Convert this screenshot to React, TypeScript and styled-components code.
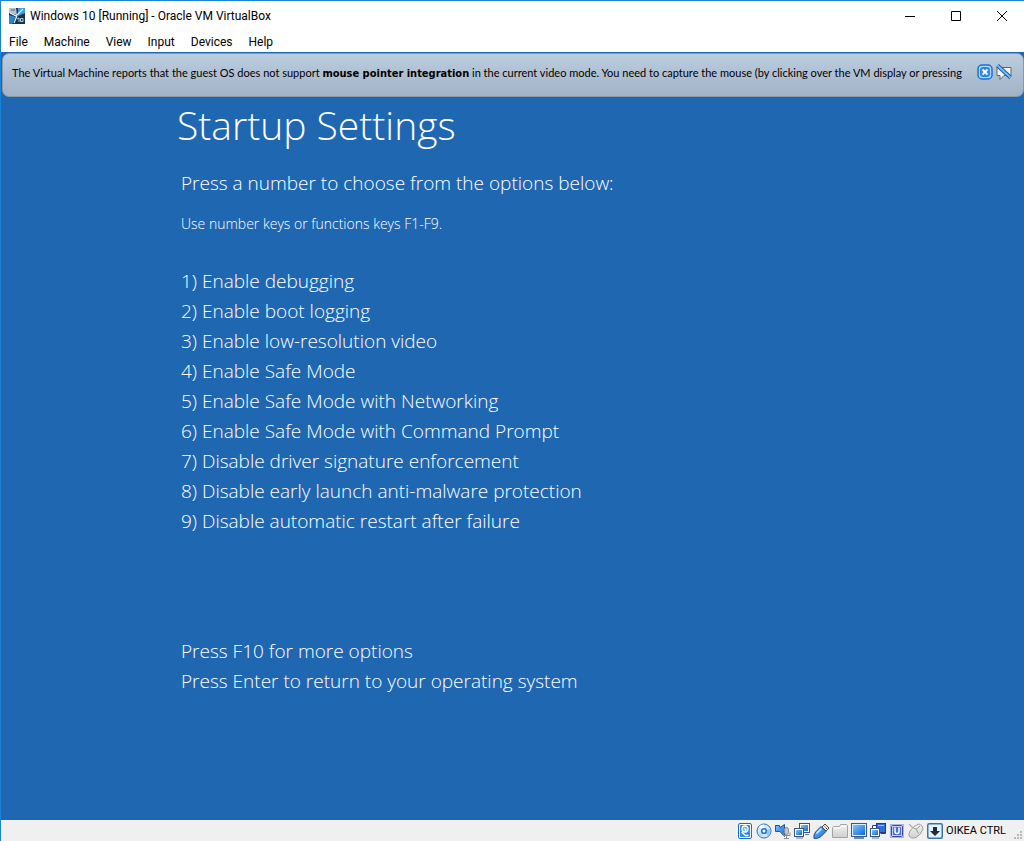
import React from "react";
import styled, { createGlobalStyle } from "styled-components";

const uiFont = `Roboto, "Open Sans", sans-serif`;
const dialogFont = `Lato, "Liberation Sans", sans-serif`;
const dialogBoldFont = `"DejaVu Sans Condensed", "DejaVu Sans", sans-serif`;
const lightFont = `"Open Sans", "Noto Sans", sans-serif`;

const GlobalStyle = createGlobalStyle`
  *, *::before, *::after { box-sizing: border-box; }
  body { margin: 0; background: #2067b2; }
`;

const Window = styled.div`
  min-height: 100vh;
  display: flex;
  flex-direction: column;
  border-top: 1px solid #1883d7;
  border-left: 1px solid #1883d7;
  background: #2067b2;
  font-family: ${uiFont};
  font-size: 12px;
  color: #000;
`;

const TitleBar = styled.header`
  display: flex;
  align-items: center;
  height: 30px;
  padding-left: 8px;
  background: #fff;
`;

const WindowTitle = styled.h1`
  flex: 1;
  margin: 0 0 0 5px;
  font-size: 12px;
  line-height: 16px;
  font-weight: 400;
  white-space: nowrap;
`;

const CaptionButton = styled.button`
  display: flex;
  align-items: center;
  justify-content: center;
  width: 46px;
  height: 30px;
  padding: 0 0 0 2px;
  border: 0;
  background: transparent;
`;

const MenuBar = styled.nav`
  display: flex;
  height: 21px;
  background: #fff;
`;

const MenuButton = styled.button`
  padding: 0 8px;
  border: 0;
  background: transparent;
  font: 12px/20px ${uiFont};
  color: #000;
`;

const Notice = styled.section`
  display: flex;
  align-items: flex-start;
  gap: 8px;
  height: 44px;
  margin: 1px 0 0 1px;
  padding: 10px 11px 0 9px;
  border: 1px solid #8b98a8;
  border-radius: 7px;
  background: linear-gradient(#bdcde0, #a2b2c6);
`;

const NoticeText = styled.p`
  flex: 1;
  min-width: 0;
  margin: 0;
  overflow: hidden;
  font: 11px/18px ${dialogFont};
  white-space: nowrap;

  b {
    font-family: ${dialogBoldFont};
  }
`;

const NoticeActions = styled.div`
  display: flex;
  gap: 3px;
`;

const IconButton = styled.button`
  display: block;
  width: 16px;
  height: 16px;
  padding: 0;
  border: 0;
  background: transparent;
`;

const Screen = styled.main`
  flex: 1;
  padding: 0 24px 100px 180px;
  font-family: ${lightFont};
  font-weight: 300;
  color: #fff;
`;

const ScreenTitle = styled.h2`
  margin: 0 0 15px -4px;
  font-size: 39px;
  line-height: 56px;
  font-weight: 300;
`;

const Lead = styled.p`
  margin: 0;
  font-size: 19px;
  line-height: 30px;
`;

const Hint = styled.p`
  margin: 16px 0 32px;
  font-size: 14px;
  line-height: 20px;
`;

const Options = styled.ol`
  margin: 0 0 100px;
  padding: 0;
  list-style: none;
  font-size: 19px;
  line-height: 30px;
`;

const StatusBar = styled.footer`
  display: flex;
  justify-content: flex-end;
  align-items: center;
  height: 21px;
  background: #f0f0f0;
`;

const Indicators = styled.div`
  display: flex;
  gap: 3px;
`;

const HostKey = styled.span`
  margin: 0 8px 0 3px;
  font: 11px/16px ${uiFont};
`;

const Grip = styled.svg`
  align-self: flex-end;
  margin: 0 1px 1px 0;
`;

const options = [
  "Enable debugging",
  "Enable boot logging",
  "Enable low-resolution video",
  "Enable Safe Mode",
  "Enable Safe Mode with Networking",
  "Enable Safe Mode with Command Prompt",
  "Disable driver signature enforcement",
  "Disable early launch anti-malware protection",
  "Disable automatic restart after failure",
];

const Gradients = () => (
  <svg width="0" height="0" style={{ position: "absolute" }} aria-hidden="true">
    <defs>
      <linearGradient id="blue" x1="0" y1="0" x2="1" y2="1">
        <stop offset="0" stopColor="#7cc6ff" />
        <stop offset="1" stopColor="#1268d8" />
      </linearGradient>
      <linearGradient id="grey" x1="0" y1="0" x2="0" y2="1">
        <stop offset="0" stopColor="#f4f4f4" />
        <stop offset="1" stopColor="#cfcfcf" />
      </linearGradient>
    </defs>
  </svg>
);

const Icon = ({ children }: { children: React.ReactNode }) => (
  <svg width="16" height="16" viewBox="0 0 16 16" display="block" aria-hidden="true">
    {children}
  </svg>
);

const indicators: { label: string; art: React.ReactNode }[] = [
  {
    label: "Hard disks",
    art: (
      <>
        <rect x="1.5" y=".5" width="13" height="15" rx="1.500" fill="#fff" stroke="#1a6cc8" />
        <rect x="3" y="2" width="10" height="12" rx="1" fill="#2f8ae2" />
        <circle cx="8" cy="6" r="3" fill="#5db0f5" stroke="#fff" strokeWidth="1.3" />
        <path d="M4.500 9l4 3.500h3M7 5.500l2 1-1 2" stroke="#fff" strokeWidth="1.300" fill="none" />
      </>
    ),
  },
  {
    label: "Optical drives",
    art: (
      <>
        <circle cx="8" cy="8" r="7" fill="#cfe8fb" stroke="#2b6fbd" />
        <path d="M8 8L3 3.5A6.500 6.500 0 0 1 8 1.500z" fill="#fff" />
        <path d="M8 8L14 6A6 6 0 0 1 12 13z" fill="#8fc9f7" />
        <path d="M8 8L2 10A6 6 0 0 0 6 14z" fill="#b8e3d3" />
        <circle cx="8" cy="8" r="2.300" fill="#fff" stroke="#2374cf" strokeWidth="1.600" />
      </>
    ),
  },
  {
    label: "Audio",
    art: (
      <>
        <path d="M.5 2.500h4l.5 2 4.500-3v12L5 8.500H.5z" fill="url(#blue)" stroke="#1c5796" />
        <rect x="9.500" y="4.500" width="4" height="7" rx="2" fill="#c4c4c4" stroke="#8b8b8b" />
        <path d="M8 9.500v3h7v-3M11.500 12v3M9 15.500h5" fill="none" stroke="#8b8b8b" />
      </>
    ),
  },
  {
    label: "Network",
    art: (
      <>
        <rect x="5.500" y=".5" width="10" height="9" fill="#fff" stroke="#3c5574" />
        <rect x="7" y="2" width="7" height="6" fill="url(#blue)" />
        <rect x=".5" y="5.500" width="9" height="8" fill="#fff" stroke="#3c5574" />
        <rect x="2" y="7" width="6" height="5" fill="url(#blue)" />
        <path d="M2 15h7M11 11.500h4" stroke="#667b94" />
      </>
    ),
  },
  {
    label: "USB devices",
    art: (
      <>
        <path d="M9 4l3-3 4 4-3 3z" fill="#eee" stroke="#444" />
        <path d="M8 3.500l5 5-5 5Q4.500 16 1 15.500 0 12 3 8.500z" fill="url(#blue)" stroke="#1c4f89" />
        <path d="M3.500 10.500l5-5" stroke="#d7efff" strokeWidth="1.5" />
        <path d="M11.500 3.500l1 1M13 5l1 1" stroke="#333" />
      </>
    ),
  },
  {
    label: "Shared folders",
    art: (
      <>
        <path d="M.5 14.500V4.500l1-1h6l1-2h6l1 1v12z" fill="url(#grey)" stroke="#a4a4a4" />
        <path d="M2 5h6l1-1.500h5" stroke="#fff" fill="none" />
      </>
    ),
  },
  {
    label: "Display",
    art: (
      <>
        <rect x=".5" y=".5" width="15" height="13" fill="#d8edff" stroke="#315b93" />
        <rect x="2" y="2" width="12" height="10" fill="url(#blue)" />
        <path d="M3 15h10" stroke="#4c6584" strokeWidth="1.500" />
      </>
    ),
  },
  {
    label: "Recording",
    art: (
      <>
        <path d="M2.500 11V2.500h4v3h9v5h-5" fill="#fff" stroke="#24368d" />
        <rect x="6.500" y=".5" width="9" height="9" fill="#2b6fe0" stroke="#24368d" />
        <path d="M8 2.500h6" stroke="#9cc8ff" />
        <rect x=".5" y="5.500" width="9" height="8" fill="#fff" stroke="#3c5574" />
        <rect x="2" y="7" width="6" height="5" fill="url(#blue)" />
        <path d="M2 15h7" stroke="#667b94" />
      </>
    ),
  },
  {
    label: "Processor features",
    art: (
      <>
        <rect x="1.500" y="1.500" width="13" height="13" fill="none" stroke="#5f78d0" strokeWidth="1" strokeDasharray="1 1" />
        <rect x="2.500" y="2.500" width="11" height="11" rx="1" fill="#c4d0ff" stroke="#3449ad" />
        <rect x="4" y="4" width="8" height="8" fill="#4a6fe0" />
        <path d="M6 4.500v4q0 2 2 2t2-2v-4" fill="none" stroke="#fff" strokeWidth="1.500" />
      </>
    ),
  },
  {
    label: "Mouse integration",
    art: (
      <>
        <path d="M2 8Q6 2 11 1q4 1 4 5-2 6-7 8.500Q3 16 1 13q-.5-2 1-5z" fill="url(#grey)" stroke="#a0a0a0" />
        <path d="M5 4.500q4 1 5.500 6M8 6.500l4-3.500" fill="none" stroke="#999" />
        <path d="M1 1l4 4" stroke="#b5b5b5" strokeWidth="1.500" />
      </>
    ),
  },
  {
    label: "Host key",
    art: (
      <>
        <rect x=".75" y=".75" width="14.500" height="14.500" rx="1.500" fill="#e6f3ff" stroke="#3774a9" strokeWidth="1.500" />
        <path d="M6 4h4v4h3l-5 5-5-5h3z" fill="#1d2c3c" />
      </>
    ),
  },
];

const menus = ["File", "Machine", "View", "Input", "Devices", "Help"];

export default function App() {
  return (
    <Window>
      <GlobalStyle />
      <Gradients />
      <TitleBar>
        <Icon>
          <rect width="16" height="16" fill="#17344f" />
          <path d="M0 0h7l1 7-8-2z" fill="#b7c3cc" />
          <path d="M9 0h7v5L9 8z" fill="#3c9de0" />
          <path d="M0 7l7 2-4 7H0z" fill="#2f86c4" />
          <path d="M1 5l6 3 7-7M8 8l-3 7" stroke="#e6f4fc" strokeWidth="1.200" fill="none" />
          <path d="M8 11l2-1v4M11.500 10.500h2.500v3h-2.500z" stroke="#b9cede" fill="none" />
          <path d="M2 2h4" stroke="#59636b" />
        </Icon>
        <WindowTitle>Windows 10 [Running] - Oracle VM VirtualBox</WindowTitle>
        <CaptionButton aria-label="Minimize">
          <svg width="10" height="10"><path d="M0 5.500h10" stroke="#000" /></svg>
        </CaptionButton>
        <CaptionButton aria-label="Maximize">
          <svg width="10" height="10"><path d="M.5.5h9v9h-9z" fill="none" stroke="#000" /></svg>
        </CaptionButton>
        <CaptionButton aria-label="Close">
          <svg width="10" height="10"><path d="M0 0l10 10M10 0L0 10" stroke="#000" /></svg>
        </CaptionButton>
      </TitleBar>
      <MenuBar>
        {menus.map((m) => (
          <MenuButton key={m}>{m}</MenuButton>
        ))}
      </MenuBar>
      <Notice>
        <NoticeText>
          The Virtual Machine reports that the guest OS does not support <b>mouse pointer integration</b> in the
          current video mode. You need to capture the mouse (by clicking over the VM display or pressing
        </NoticeText>
        <NoticeActions>
          <IconButton aria-label="Close message">
            <Icon>
              <rect x="1" y="1" width="14" height="14" rx="4" fill="#a9dcff" stroke="#1a6fd0" strokeWidth="1.500" />
              <rect x="3" y="3" width="10" height="10" rx="3" fill="#2c86e4" />
              <path d="M5.500 5.500l5 5M10.500 5.500l-5 5" stroke="#fff" strokeWidth="2" />
            </Icon>
          </IconButton>
          <IconButton aria-label="Do not show this message again">
            <Icon>
              <path d="M1 3.500h14v8H8l-4 4v-4H1z" fill="#f3f3f3" stroke="#666" />
              <path d="M1.500 1.500l13 12" stroke="#1757a8" strokeWidth="4" />
              <path d="M1.500 1.500l13 12" stroke="#6fc0ff" strokeWidth="2" />
            </Icon>
          </IconButton>
        </NoticeActions>
      </Notice>
      <Screen>
        <ScreenTitle>Startup Settings</ScreenTitle>
        <Lead>Press a number to choose from the options below:</Lead>
        <Hint>Use number keys or functions keys F1-F9.</Hint>
        <Options>
          {options.map((o, i) => (
            <li key={o}>{i + 1}) {o}</li>
          ))}
        </Options>
        <Lead>Press F10 for more options</Lead>
        <Lead>Press Enter to return to your operating system</Lead>
      </Screen>
      <StatusBar>
        <Indicators>
          {indicators.map((n) => (
            <IconButton key={n.label} aria-label={n.label}>
              <Icon>{n.art}</Icon>
            </IconButton>
          ))}
        </Indicators>
        <HostKey>OIKEA CTRL</HostKey>
        <Grip width="9" height="9" aria-hidden="true">
          <path d="M6 0h2v2H6zM3 3h2v2H3zM6 3h2v2H6zM0 6h2v2H0zM3 6h2v2H3zM6 6h2v2H6z" fill="#b8b8b8" />
        </Grip>
      </StatusBar>
    </Window>
  );
}
